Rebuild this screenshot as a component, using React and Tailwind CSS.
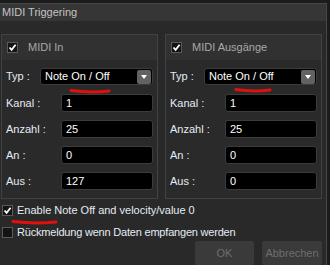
import React from "react";

const font = { fontFamily: '"Liberation Sans", Arial, sans-serif' };

const CheckBox = ({ checked }) => (
  <span className="flex h-[11px] w-[11px] items-center justify-center border border-[#5a5a5a] bg-[#141414]">
    {checked && (
      <svg width="9" height="9" viewBox="0 0 9 9">
        <path d="M1.5 4.5 L3.6 6.8 L7.6 1.8" fill="none" stroke="#ffffff" strokeWidth="1.8" />
      </svg>
    )}
  </span>
);

const Field = ({ label, value }) => (
  <div className="flex h-[26px] items-center">
    <span className="w-[55px] text-[11px] text-[#e4ecf4]">{label}</span>
    <div className="flex h-[18px] flex-1 items-center rounded-[3px] border border-[#3c3c3c] bg-black px-[4px] text-[11px] text-white">
      {value}
    </div>
  </div>
);

const MidiGroup = ({ title, values }) => (
  <div className="flex w-[157px] flex-col border border-[#424242] bg-[#2a2a2a]">
    <div className="flex h-[25px] items-center gap-[10px] bg-[#313131] px-[5px]">
      <CheckBox checked />
      <span className="text-[11px] text-[#a8a8a8]">{title}</span>
    </div>
    <div className="flex flex-col px-[4px] pt-[3px] pb-[4px]">
      <div className="flex h-[27px] items-center">
        <span className="w-[34px] text-[11px] text-[#e4ecf4]">Typ :</span>
        <div className="flex h-[17px] flex-1 items-center justify-between rounded-[3px] border border-[#3c3c3c] bg-black pl-[4px] pr-[1px] text-[11px] text-white">
          <span>Note On / Off</span>
          <span className="flex h-[14px] w-[14px] items-center justify-center rounded-[2px] bg-[#626262]">
            <svg width="6" height="4" viewBox="0 0 6 4">
              <path d="M0 0 H6 L3 4 Z" fill="#ffffff" />
            </svg>
          </span>
        </div>
      </div>
      {values.map(([l, v]) => (
        <Field key={l} label={l} value={v} />
      ))}
    </div>
  </div>
);

const RedMark = ({ className, w }) => (
  <svg className={className} width={w} height="6" viewBox={`0 0 ${w} 6`}>
    <path d={`M2 2.5 Q${w / 2} 5 ${w - 2} 3`} fill="none" stroke="#e01010" strokeWidth="3" strokeLinecap="round" />
  </svg>
);

export default function App() {
  return (
    <div className="h-[265px] w-[330px] overflow-hidden bg-[#1c1c1c] pt-[3px]" style={font}>
      <div className="relative flex h-[262px] w-[327px] flex-col border-t border-r border-[#474747] bg-[#292929]">
        <div className="flex h-[26px] items-center bg-[#363636] px-[2px] text-[11px] text-[#c4c4c4]">
          MIDI Triggering
        </div>
        <div className="flex gap-[7px] pl-[1px] pt-[13px]">
          <MidiGroup
            title="MIDI In"
            values={[
              ["Kanal :", "1"],
              ["Anzahl :", "25"],
              ["An :", "0"],
              ["Aus :", "127"],
            ]}
          />
          <MidiGroup
            title="MIDI Ausgänge"
            values={[
              ["Kanal :", "1"],
              ["Anzahl :", "25"],
              ["An :", "0"],
              ["Aus :", "0"],
            ]}
          />
        </div>
        <div className="mt-[5px] flex h-[12px] items-center gap-[4px] pl-[2px] text-[11px] text-[#e4ecf4]">
          <CheckBox checked />
          <span>Enable Note Off and velocity/value 0</span>
        </div>
        <div className="mt-[10px] flex h-[12px] items-center gap-[4px] pl-[2px] text-[11px] text-[#e4ecf4]">
          <CheckBox />
          <span className="tracking-[-0.2px]">Rückmeldung wenn Daten empfangen werden</span>
        </div>
        <div className="mt-[3px] flex justify-end gap-[8px] pr-[4px]">
          <div className="flex h-[24px] w-[59px] items-center justify-center rounded-[2px] bg-[#3a3a3a] text-[11px] text-[#6e6e6e]">
            OK
          </div>
          <div className="flex h-[24px] w-[60px] items-center justify-center rounded-[2px] bg-[#3a3a3a] text-[11px] text-[#6e6e6e]">
            Abbrechen
          </div>
        </div>
        <RedMark className="absolute left-[69px] top-[84px]" w={42} />
        <RedMark className="absolute left-[234px] top-[83px]" w={38} />
        <RedMark className="absolute left-[11px] top-[215px]" w={47} />
      </div>
    </div>
  );
}
